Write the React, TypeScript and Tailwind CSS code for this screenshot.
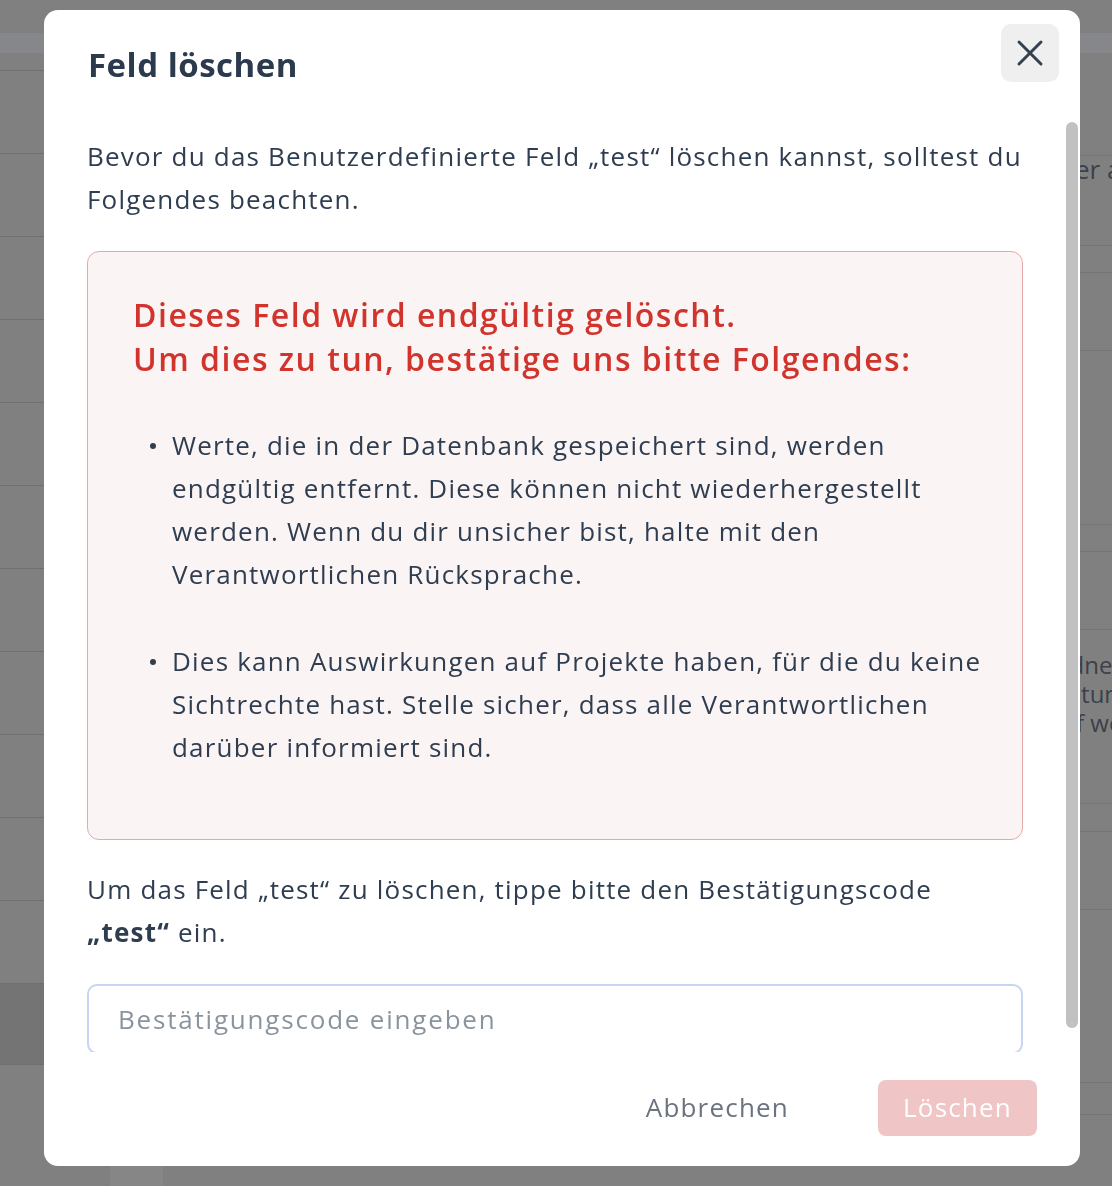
import { X } from 'lucide-react';

const leftRows = [18, 83, 83, 83, 83, 83, 83, 83, 83, 83, 83, 83];

function BackgroundPage() {
  return (
    <div className="flex h-screen w-full flex-col overflow-hidden bg-[#808080] font-['Open_Sans',sans-serif] text-[26px] text-[#3b4049]">
      <div className="h-[33px] shrink-0" />
      <div className="h-[20px] shrink-0 bg-[#86878b]" />
      <div className="flex flex-1">
        {/* left table, mostly hidden under the modal */}
        <div className="flex w-[1060px] shrink-0 flex-col">
          {leftRows.map((h, i) => (
            <div key={i} className="border-b border-[#707070]" style={{ height: h }} />
          ))}
          <div className="h-[81px] border-b border-[#707070] bg-[#747474]" />
          <div className="flex flex-1">
            <div className="ml-[110px] h-[20px] w-[53px] self-end bg-[#868686]" />
          </div>
        </div>
        {/* right panel */}
        <div className="flex min-w-0 flex-1 flex-col">
          <div className="h-[103px] border-b border-[#757575]" />
          <div className="h-[89px] whitespace-nowrap pl-[15px] leading-[26px]">er anlegen</div>
          <div className="h-[28px] border-y border-[#757575]" />
          <div className="h-[78px] border-b border-[#757575]" />
          <div className="h-[174px] border-b border-[#757575]" />
          <div className="h-[27px] border-b border-[#757575]" />
          <div className="h-[78px] border-b border-[#757575]" />
          <div className="flex h-[173px] flex-col whitespace-nowrap pt-[20px] text-[24px] leading-[29px]">
            <span className="-ml-[19px]">Ordner</span>
            <span className="-ml-[16px]">Haltung</span>
            <span className="-ml-[12px]">auf wer</span>
          </div>
          <div className="h-[29px] border-y border-[#757575]" />
          <div className="h-[78px] border-b border-[#757575]" />
          <div className="h-[173px] border-b border-[#757575]" />
          <div className="h-[32px] border-b border-[#757575]" />
        </div>
      </div>
    </div>
  );
}

function DeleteFieldModal() {
  return (
    <div className="fixed left-[44px] top-[10px] flex h-[1156px] w-[1036px] flex-col overflow-hidden rounded-[14px] bg-white font-['Open_Sans',sans-serif] text-[#2f3d50]">
      {/* Header */}
      <div className="relative h-[100px] shrink-0 px-[44px] pt-[35px]">
        <h2 className="text-[33px] font-bold leading-[40px] tracking-[0.5px] text-[#2c3a4d]">Feld löschen</h2>
        <button className="absolute right-[21px] top-[14px] flex h-[58px] w-[58px] items-center justify-center rounded-[10px] bg-[#efefef] text-[#33404f]">
          <X size={44} strokeWidth={1.6} />
        </button>
      </div>

      {/* Scrollable body */}
      <div className="relative h-[942px] shrink-0 overflow-hidden">
        <div className="pl-[43px] pr-[57px] pt-[25px] text-[26px] leading-[43px] tracking-[1.2px]">
          <p>
            Bevor du das Benutzerdefinierte Feld „test“ löschen kannst, solltest du
            <br />
            Folgendes beachten.
          </p>

          <div className="mt-[30px] rounded-[12px] border border-[#e6a9a6] bg-[#fbf4f4] pb-[70px] pl-[45px] pr-[20px] pt-[41px]">
            <h3 className="text-[32px] font-semibold leading-[44px] tracking-[1.5px] text-[#d0342c]">
              Dieses Feld wird endgültig gelöscht.
              <br />
              Um dies zu tun, bestätige uns bitte Folgendes:
            </h3>
            <ul className="mt-[43px] flex flex-col gap-[44px]">
              <li className="flex">
                <span className="ml-[17px] mr-[16px] mt-[19px] h-[6px] w-[6px] shrink-0 rounded-full bg-[#2f3d50]" />
                <span>
                  Werte, die in der Datenbank gespeichert sind, werden
                  <br />
                  endgültig entfernt. Diese können nicht wiederhergestellt
                  <br />
                  werden. Wenn du dir unsicher bist, halte mit den
                  <br />
                  Verantwortlichen Rücksprache.
                </span>
              </li>
              <li className="flex">
                <span className="ml-[17px] mr-[16px] mt-[19px] h-[6px] w-[6px] shrink-0 rounded-full bg-[#2f3d50]" />
                <span>
                  Dies kann Auswirkungen auf Projekte haben, für die du keine
                  <br />
                  Sichtrechte hast. Stelle sicher, dass alle Verantwortlichen
                  <br />
                  darüber informiert sind.
                </span>
              </li>
            </ul>
          </div>

          <p className="mt-[28px]">
            Um das Feld „test“ zu löschen, tippe bitte den Bestätigungscode
            <br />
            <strong className="font-bold">„test“</strong> ein.
          </p>

          <input
            type="text"
            placeholder="Bestätigungscode eingeben"
            className="mt-[30px] h-[70px] w-full rounded-[10px] border-2 border-[#c6d5f2] px-[29px] text-[26px] tracking-[1.8px] text-[#2f3d50] outline-none placeholder:text-[#8a949f]"
          />
        </div>

        {/* scrollbar thumb */}
        <div className="absolute right-[2px] top-[12px] h-[906px] w-[12px] rounded-full bg-[#c1c1c1]" />
      </div>

      {/* Footer */}
      <div className="flex flex-1 items-center justify-end gap-[89px] pb-[3px] pr-[43px] tracking-[1.2px]">
        <button className="text-[26px] text-[#6b7380]">Abbrechen</button>
        <button className="h-[56px] w-[159px] rounded-[8px] bg-[#f0c5c5] text-[26px] text-white">Löschen</button>
      </div>
    </div>
  );
}

export default function App() {
  return (
    <div className="relative">
      <BackgroundPage />
      <DeleteFieldModal />
    </div>
  );
}
